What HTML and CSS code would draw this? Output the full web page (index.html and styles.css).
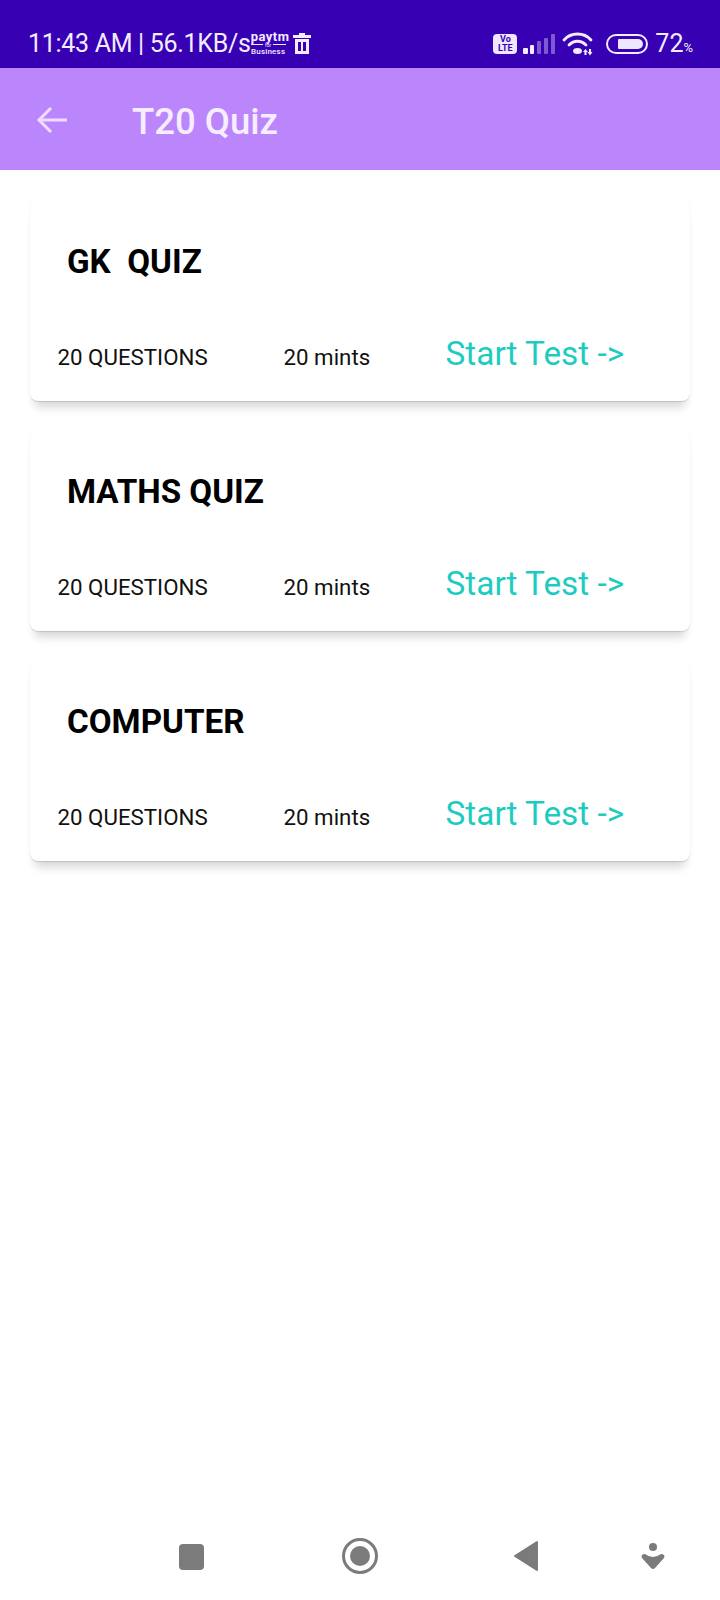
FILE: index.html
```html
<!DOCTYPE html>
<html lang="en">
<head>
<meta charset="utf-8">
<title>T20 Quiz</title>
<link rel="stylesheet" href="styles.css">
</head>
<body>
<div class="phone">
  <header class="status">
    <div class="status-left">
      <span class="status-text">11:43 AM | 56.1KB/s</span>
      <span class="paytm">
        <span class="paytm-name">paytm</span>
        <span class="paytm-for">for</span>
        <span class="paytm-biz">Business</span>
      </span>
      <svg class="trash" width="18" height="21" viewBox="0 0 18 21"><path fill="#f3ecff" fill-rule="evenodd" d="M6 0h6v2h6v3H0V2h6zM2 6h14v15H2zM5 9v9h3V9zM10 9v9h3V9z"/></svg>
    </div>
    <div class="status-right">
      <span class="volte"><span>Vo</span><span>LTE</span></span>
      <svg class="signal" width="32" height="20" viewBox="0 0 32 20"><rect x="0" y="14" width="5" height="6" rx="1" fill="#f3ecff"/><rect x="7" y="11" width="4" height="9" rx="1" fill="#f3ecff"/><rect x="14" y="7" width="4" height="13" rx="1" fill="#7e5ad0"/><rect x="21" y="4" width="4" height="16" rx="1" fill="#7e5ad0"/><rect x="28" y="0" width="4" height="20" rx="1" fill="#7e5ad0"/></svg>
      <svg class="wifi" width="32" height="24" viewBox="0 0 32 24"><g fill="none" stroke="#f3ecff" stroke-width="2.800" stroke-linecap="round"><path d="M2 8C9 0 22 0 29 8"/><path d="M7 13c5-5 12-5 17 0"/></g><ellipse cx="15.500" cy="19" rx="4.500" ry="3" fill="#f3ecff"/><path fill="#f3ecff" d="M23.500 17l2.500 3h-1.500v3h-2v-3H21zM27 17h2v3h1.500L28 23.500 25.500 20H27z"/></svg>
      <span class="battery"><span class="battery-fill"></span></span>
      <span class="percent">72<small>%</small></span>
    </div>
  </header>
  <div class="appbar">
    <svg class="back" width="32" height="28" viewBox="0 0 32 28"><path fill="none" stroke="#f0dcff" stroke-width="3" d="M31 14H3M15 2 3 14l12 12"/></svg>
    <h1 class="title">T20 Quiz</h1>
  </div>
  <main class="list">
    <section class="card">
      <h2 class="card-title">GK&nbsp; QUIZ</h2>
      <div class="card-row">
        <span class="meta meta-q">20 QUESTIONS</span>
        <span class="meta meta-t">20 mints</span>
        <span class="start">Start Test -&gt;</span>
      </div>
    </section>
    <section class="card">
      <h2 class="card-title">MATHS QUIZ</h2>
      <div class="card-row">
        <span class="meta meta-q">20 QUESTIONS</span>
        <span class="meta meta-t">20 mints</span>
        <span class="start">Start Test -&gt;</span>
      </div>
    </section>
    <section class="card">
      <h2 class="card-title">COMPUTER</h2>
      <div class="card-row">
        <span class="meta meta-q">20 QUESTIONS</span>
        <span class="meta meta-t">20 mints</span>
        <span class="start">Start Test -&gt;</span>
      </div>
    </section>
  </main>
  <nav class="navbar">
    <svg class="nav-square" width="28" height="28" viewBox="0 0 28 28"><rect x="1" y="1" width="25" height="26" rx="4" fill="#7b7b7b"/></svg>
    <svg class="nav-home" width="38" height="38" viewBox="0 0 38 38"><circle cx="19" cy="19" r="16.500" fill="none" stroke="#7b7b7b" stroke-width="3"/><circle cx="19" cy="19" r="10" fill="#7b7b7b"/></svg>
    <svg class="nav-back" width="26" height="32" viewBox="0 0 26 32"><path fill="#7b7b7b" stroke="#7b7b7b" stroke-linejoin="round" stroke-width="2" d="M24 2v28L2 16z"/></svg>
    <svg class="nav-access" width="24" height="28" viewBox="0 0 24 28"><circle cx="12" cy="5" r="4" fill="#7b7b7b"/><path fill="#7b7b7b" d="M1 13q-1 1 0 3l9 10q2 2 4 0l9-10q1-2 0-3-1-1-3-1-4 3-8 3t-8-3q-2 0-3 1z"/></svg>
  </nav>
</div>
</body>
</html>
```
FILE: styles.css
```css
* { box-sizing: border-box; }
html, body { margin: 0; padding: 0; }
body { background: #fff; font-family: Roboto, "Noto Sans", sans-serif; }
.phone { width: 720px; height: 1600px; display: flex; flex-direction: column; overflow: hidden; }
.status { height: 68px; flex: none; background: #3700b3; color: #f3ecff; display: flex; justify-content: space-between; align-items: center; padding: 19px 27px 0 28px; }
.status-left, .status-right { display: flex; align-items: center; }
.status-text { font-size: 25px; line-height: 28px; letter-spacing: -0.3px; white-space: nowrap; margin-top: 1px; }
.paytm { display: flex; flex-direction: column; align-items: stretch; width: 35px; margin-top: -1px; text-align: center; }
.paytm-name { font-size: 13px; font-weight: 700; line-height: 11px; letter-spacing: 0.5px; }
.paytm-for { display: flex; align-items: center; gap: 2px; font-size: 5px; line-height: 6px; }
.paytm-for::before, .paytm-for::after { content: ""; flex: 1; height: 1px; background: #f3ecff; }
.paytm-biz { font-size: 8px; font-weight: 500; line-height: 8px; letter-spacing: 0.2px; white-space: nowrap; }
.trash { margin-left: 7px; }
.volte { width: 24px; height: 20px; margin-right: 6px; background: #efe6ff; border-radius: 4px; color: #3700b3; font-size: 9px; font-weight: 700; line-height: 9px; display: flex; flex-direction: column; align-items: center; justify-content: center; }
.signal { margin-right: 7px; }
.wifi { margin-right: 12px; }
.battery { width: 42px; height: 20px; border: 2px solid #f3ecff; border-radius: 10px; padding: 3px 3px 3px 10px; margin-right: 7px; display: block; }
.battery-fill { display: block; height: 10px; background: #efe6ff; border-radius: 1px 5px 5px 1px; }
.percent { font-size: 25px; line-height: 28px; margin-top: 5px; }
.percent small { font-size: 13px; }
.appbar { height: 102px; flex: none; background: #bb86fc; display: flex; align-items: center; padding-left: 36px; }
.back { margin-right: 64px; margin-top: 2px; }
.title { margin: 4px 0 0; font-size: 36.500px; font-weight: 500; color: #f6edff; }
.list { flex: 1; padding: 30px 30px 0; display: flex; flex-direction: column; gap: 29px; }
.card { height: 201px; background: #fff; border-radius: 8px; box-shadow: 0 11px 10px -5px rgba(0,0,0,.16), 0 1px 1px rgba(0,0,0,.12), 0 0 1px rgba(0,0,0,.05); padding: 38px 0 0 27.500px; }
.card-title { margin: 0 0 0 9.500px; font-size: 33.200px; font-weight: 700; line-height: 48px; color: #000; }
.card-row { display: flex; align-items: flex-start; margin-top: 46px; }
.meta { font-size: 22.300px; line-height: 28px; color: #111; margin-top: 11px; }
.meta-q { width: 226px; }
.meta-t { width: 162px; }
.start { font-size: 33.400px; line-height: 44px; color: #1dccc0; }
.navbar { height: 118px; flex: none; display: flex; align-items: flex-start; padding: 60px 0 0 178px; }
.nav-square { margin-top: 1px; margin-right: 135px; }
.nav-home { margin-top: -5px; margin-right: 134px; }
.nav-back { margin-top: -2px; margin-right: 102px; }
```
